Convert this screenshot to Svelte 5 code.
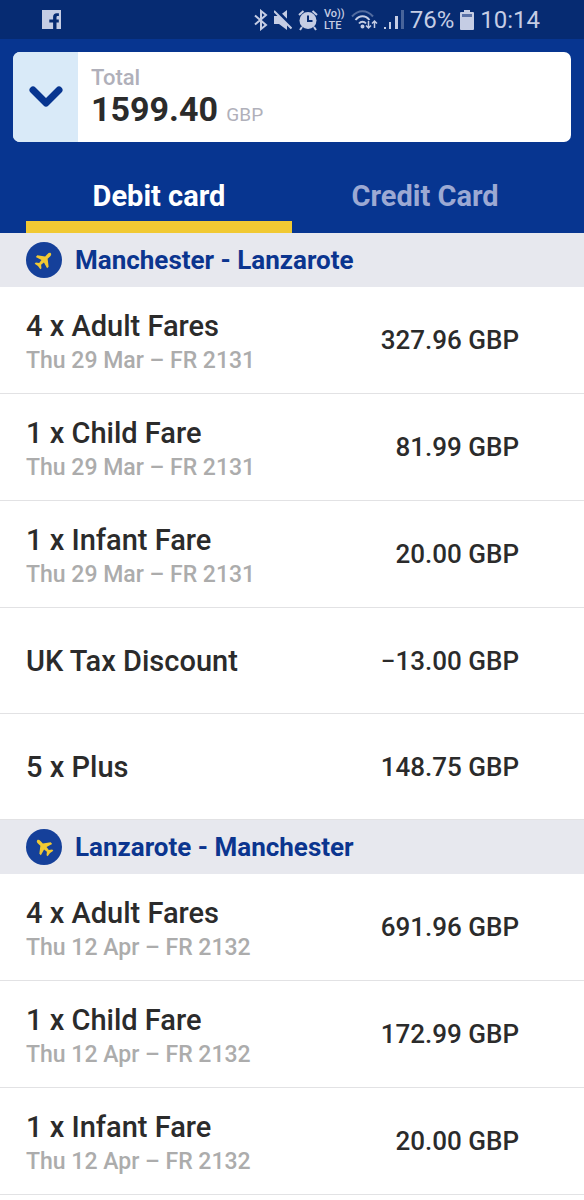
<script lang="ts">
  type Fare = { name: string; detail?: string; price: string };
  type Flight = { route: string; inbound?: boolean; fares: Fare[] };

  const flights: Flight[] = [
    {
      route: "Manchester - Lanzarote",
      fares: [
        { name: "4 x Adult Fares", detail: "Thu 29 Mar – FR 2131", price: "327.96 GBP" },
        { name: "1 x Child Fare", detail: "Thu 29 Mar – FR 2131", price: "81.99 GBP" },
        { name: "1 x Infant Fare", detail: "Thu 29 Mar – FR 2131", price: "20.00 GBP" },
        { name: "UK Tax Discount", price: "−13.00 GBP" },
        { name: "5 x Plus", price: "148.75 GBP" },
      ],
    },
    {
      route: "Lanzarote - Manchester",
      inbound: true,
      fares: [
        { name: "4 x Adult Fares", detail: "Thu 12 Apr – FR 2132", price: "691.96 GBP" },
        { name: "1 x Child Fare", detail: "Thu 12 Apr – FR 2132", price: "172.99 GBP" },
        { name: "1 x Infant Fare", detail: "Thu 12 Apr – FR 2132", price: "20.00 GBP" },
      ],
    },
  ];

  let activeTab = $state("debit");
</script>

<div class="screen">
  <div class="status-bar">
    <svg width="19" height="19" viewBox="0 0 19 19">
      <path fill="currentColor" fill-rule="evenodd" d="M0 0h19v19h-4.500v-6.500h2.300V9.500h-2.300V7.300c0-.9.400-1.300 1.200-1.300h1.200V3.200h-2.200c-2.300 0-3.600 1.400-3.600 3.700v2.600H7.300v3h3.800V19H0z"/>
    </svg>
    <div class="status-icons">
      <svg width="14" height="22" viewBox="0 0 14 22" fill="none" stroke="currentColor" stroke-width="2">
        <path d="M1 6.500l11 9.500-5 4V2l5 4L1 15.500"/>
      </svg>
      <svg width="18" height="22" viewBox="0 0 18 22">
        <path fill="currentColor" d="M0 7h5l8-6v20l-8-6H0z"/>
        <path d="M2 1.500l17 17" stroke="#062b72" stroke-width="4"/>
        <path d="M0 2l17.500 17.500" stroke="currentColor" stroke-width="2"/>
      </svg>
      <svg width="20" height="22" viewBox="0 0 20 22" fill="none">
        <circle cx="10" cy="11.500" r="8.500" fill="currentColor"/>
        <path d="M1 6l4.500-4M19 6l-4.500-4M4 18l-2 3M16 18l2 3" stroke="currentColor" stroke-width="2"/>
        <path d="M10 6.500v5.500h4.500" stroke="#062b72" stroke-width="2"/>
      </svg>
      <div class="volte"><span>Vo))</span><span>LTE</span></div>
      <svg width="27" height="22" viewBox="0 0 27 22" fill="none" stroke="currentColor" stroke-width="2">
        <path d="M1 7.500c6-7 15-7 21 0" opacity=".4"/>
        <path d="M4.500 11c4-5 10-5 14 0"/>
        <path d="M8 14.500c2-2.500 5-2.500 7 0"/>
        <circle cx="11.500" cy="17.500" r="1" fill="currentColor"/>
        <path d="M17.500 12v7M15 16.500l2.500 2.500 2.500-2.500M23.500 19v-7M21 14.500l2.500-2.500 2.500 2.500" stroke-width="1.500"/>
      </svg>
      <svg width="20" height="22" viewBox="0 0 20 22" fill="currentColor">
        <path d="M0 18h2v2H0zM5 13h2v7H5zM11 7h3v13h-3z"/>
        <path d="M17 1h3v19h-3z" opacity=".35"/>
      </svg>
      <span class="status-text">76%</span>
      <svg width="14" height="22" viewBox="0 0 14 22" fill="currentColor">
        <path d="M4 1h6v2h3a1 1 0 0 1 1 1v16a1 1 0 0 1-1 1H1a1 1 0 0 1-1-1V4a1 1 0 0 1 1-1h3z"/>
        <path d="M2 5h10v3H2z" fill="#5a71a6"/>
      </svg>
      <span class="status-text">10:14</span>
    </div>
  </div>

  <header>
    <div class="total-box">
      <button class="expand-btn" aria-label="Hide price breakdown">
        <svg width="34" height="22" viewBox="0 0 34 22" fill="none" stroke="currentColor" stroke-width="7" stroke-linecap="round" stroke-linejoin="round"><path d="M4 4l13 13L30 4"/></svg>
      </button>
      <div class="total">
        <span class="total-label">Total</span>
        <span class="total-value">1599.40 <small>GBP</small></span>
      </div>
    </div>

    <div class="tabs" role="tablist">
      <button class="tab" class:active={activeTab === "debit"} role="tab" aria-selected={activeTab === "debit"} onclick={() => (activeTab = "debit")}>Debit card</button>
      <button class="tab" class:active={activeTab === "credit"} role="tab" aria-selected={activeTab === "credit"} onclick={() => (activeTab = "credit")}>Credit Card</button>
    </div>
  </header>

  {#each flights as flight}
    <section>
      <h2>
        <svg width="36" height="36" viewBox="0 0 36 36">
          <circle cx="18" cy="18" r="18" fill="#15409a"/>
          <g transform="translate(18 18) rotate({flight.inbound ? -45 : 45}) scale(.8) translate(-12 -12)">
            <path fill="#f1c933" d="M12 0c1.500 0 2.200 1.700 2.200 3.500v4.300l7.800 6v2.700l-7.800-2.200-.5 4.500 3.300 2.700v2L12 22.700 7 23.500v-2l3.300-2.700-.5-4.500L2 16.500v-2.700l7.800-6V3.500C9.800 1.700 10.500 0 12 0z"/>
          </g>
        </svg>
        {flight.route}
      </h2>
      <ul>
        {#each flight.fares as fare}
          <li>
            <div class="fare" class:single={!fare.detail}>
              <span class="fare-name">{fare.name}</span>
              {#if fare.detail}
                <span class="fare-detail">{fare.detail}</span>
              {/if}
            </div>
            <span class="price">{fare.price}</span>
          </li>
        {/each}
      </ul>
    </section>
  {/each}
</div>

<style>
  :global(body) {
    background: #fff;
  }

  .screen {
    font-family: Roboto, "Liberation Sans", sans-serif;
    font-weight: 500;
    color: #2b2b2b;
  }

  .status-bar {
    display: flex;
    align-items: center;
    justify-content: space-between;
    height: 39px;
    padding: 0 44px 0 42px;
    background: #062b72;
    color: #c5cde4;
  }

  .status-icons {
    display: flex;
    align-items: center;
    gap: 6px;
  }

  .volte {
    display: flex;
    flex-direction: column;
    font-size: 11px;
    line-height: 12px;
  }

  .status-text {
    font-size: 24px;
    font-weight: 400;
    line-height: 28px;
  }

  header {
    padding: 13px 13px 0;
    background: #073590;
  }

  .total-box {
    display: flex;
    height: 90px;
    border-radius: 7px;
    overflow: hidden;
    background: #fff;
  }

  .expand-btn {
    display: flex;
    align-items: center;
    justify-content: center;
    width: 65px;
    padding: 0;
    border: none;
    background: #d9eaf8;
    color: #073590;
    cursor: pointer;
  }

  .total {
    display: flex;
    flex-direction: column;
    padding: 12px 13px;
  }

  .total-label {
    color: #b0b0ba;
    font-size: 22px;
    line-height: 28px;
  }

  .total-value {
    font-size: 34px;
    font-weight: 700;
    line-height: 34px;
  }

  .total-value small {
    color: #b0b0ba;
    font-size: 19px;
    font-weight: 400;
  }

  .tabs {
    display: flex;
    padding: 16px 13px 0;
  }

  .tab {
    flex: 1;
    padding: 21px 0 8px;
    border: none;
    border-bottom: 12px solid transparent;
    background: none;
    color: #9ca9d3;
    font-family: inherit;
    font-size: 29px;
    font-weight: 700;
    line-height: 34px;
    cursor: pointer;
  }

  .tab.active {
    border-bottom-color: #f1c933;
    color: #fff;
  }

  h2 {
    display: flex;
    align-items: center;
    gap: 13px;
    margin: 0;
    padding: 9px 26px;
    background: #e7e8ee;
    color: #0b358f;
    font-size: 26px;
    font-weight: 700;
    line-height: 36px;
  }

  ul {
    margin: 0;
    padding: 0;
    list-style: none;
  }

  li {
    display: flex;
    align-items: center;
    justify-content: space-between;
    padding: 0 65px 0 26px;
    border-bottom: 1px solid #e2e2e4;
  }

  .fare {
    display: flex;
    flex-direction: column;
    padding: 22px 0 14px;
  }

  .fare.single {
    padding: 36px 0 35px;
  }

  .fare-name {
    font-size: 29px;
    line-height: 34px;
  }

  .fare-detail {
    color: #acacac;
    font-size: 23px;
    line-height: 36px;
  }

  .price {
    font-size: 26px;
    line-height: 34px;
  }
</style>
